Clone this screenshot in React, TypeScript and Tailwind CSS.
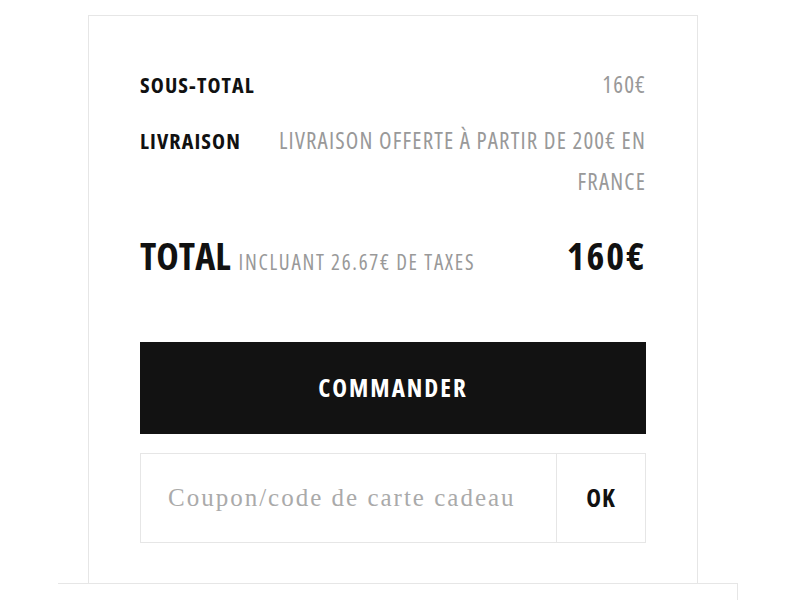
function Row({ label, children }: { label: string; children: React.ReactNode }) {
  return (
    <div className="flex items-start justify-between gap-6 leading-[41px]">
      <span className="shrink-0 text-[22px] font-bold tracking-[1.1px] text-[#111]">{label}</span>
      <span className="whitespace-nowrap text-right text-[23px] tracking-[1.15px] text-[#999]">{children}</span>
    </div>
  );
}

export default function App() {
  return (
    <div className="h-[600px] w-[800px] overflow-hidden bg-white font-['Open_Sans',sans-serif] font-stretch-condensed">
      <div className="mt-[15px] ml-[88px] h-[568px] w-[610px] border border-b-0 border-[#e6e6e6] px-[51px] pt-[48px]">
        <div className="flex flex-col gap-[15px]">
          <Row label="SOUS-TOTAL">160€</Row>
          <Row label="LIVRAISON">
            LIVRAISON OFFERTE À PARTIR DE 200€ EN
            <br />
            FRANCE
          </Row>
        </div>

        <div className="mt-[29px] flex items-baseline justify-between leading-[48px]">
          <div className="flex items-baseline gap-[8px]">
            <span className="text-[38px] font-bold text-[#111]">TOTAL</span>
            <span className="text-[21px] tracking-[1.7px] text-[#999]">INCLUANT 26.67€ DE TAXES</span>
          </div>
          <span className="text-[38px] font-bold tracking-[2px] text-[#111]">160€</span>
        </div>

        <button className="mt-[56px] h-[92px] w-full bg-[#121212] text-[25px] font-bold tracking-[2px] text-white">
          COMMANDER
        </button>

        <div className="mt-[19px] flex h-[90px] border border-[#e6e6e6]">
          <input
            className="min-w-0 flex-1 px-[27px] font-['Liberation_Serif',serif] text-[25px] tracking-[2px] text-[#333] outline-none placeholder:text-[#aaa]"
            placeholder="Coupon/code de carte cadeau"
          />
          <button className="w-[89px] border-l border-[#e6e6e6] text-[25px] font-bold tracking-[1px] text-[#111]">
            OK
          </button>
        </div>
      </div>
      <div className="ml-[58px] h-[40px] w-[680px] border-t border-r border-[#e6e6e6]" />
    </div>
  );
}
